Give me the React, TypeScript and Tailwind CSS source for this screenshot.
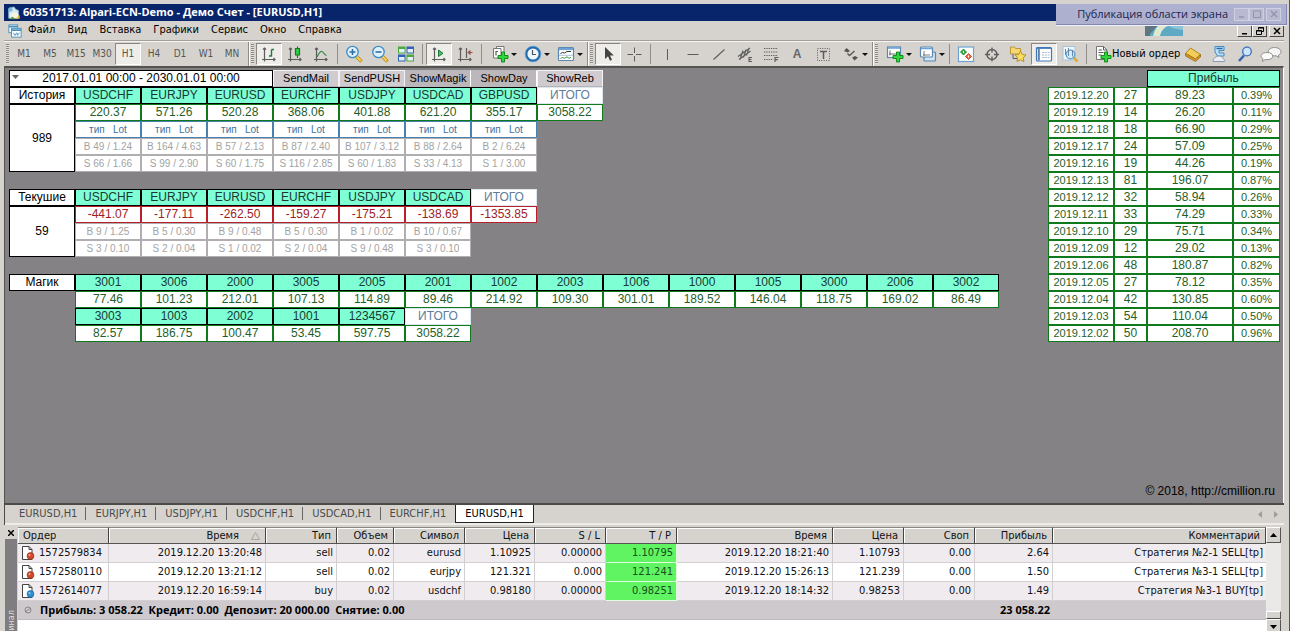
import React from 'react';
import clsx from 'clsx';

const TAHOMA = "font-['DejaVu_Sans_Condensed','DejaVu_Sans',sans-serif]";
const TAHOMA_BOLD = "font-['Open_Sans','Noto_Sans',sans-serif] font-bold";
const ARIAL = "font-['Liberation_Sans',Arial,sans-serif]";

const menuItems = ['Файл', 'Вид', 'Вставка', 'Графики', 'Сервис', 'Окно', 'Справка'];
const timeframes = ['M1', 'M5', 'M15', 'M30', 'H1', 'H4', 'D1', 'W1', 'MN'];
const chartTabs = ['EURUSD,H1', 'EURJPY,H1', 'USDJPY,H1', 'USDCHF,H1', 'USDCAD,H1', 'EURCHF,H1', 'EURUSD,H1'];

const history = [
  { symbol: 'USDCHF', profit: '220.37', buy: 'B 49 / 1.24', sell: 'S 66 / 1.66' },
  { symbol: 'EURJPY', profit: '571.26', buy: 'B 164 / 4.63', sell: 'S 99 / 2.90' },
  { symbol: 'EURUSD', profit: '520.28', buy: 'B 57 / 2.13', sell: 'S 60 / 1.75' },
  { symbol: 'EURCHF', profit: '368.06', buy: 'B 87 / 2.40', sell: 'S 116 / 2.85' },
  { symbol: 'USDJPY', profit: '401.88', buy: 'B 107 / 3.12', sell: 'S 60 / 1.83' },
  { symbol: 'USDCAD', profit: '621.20', buy: 'B 88 / 2.64', sell: 'S 33 / 4.13' },
  { symbol: 'GBPUSD', profit: '355.17', buy: 'B 2 / 6.24', sell: 'S 1 / 3.00' },
];

const current = [
  { symbol: 'USDCHF', profit: '-441.07', buy: 'B 9 / 1.25', sell: 'S 3 / 0.10' },
  { symbol: 'EURJPY', profit: '-177.11', buy: 'B 5 / 0.30', sell: 'S 2 / 0.04' },
  { symbol: 'EURUSD', profit: '-262.50', buy: 'B 9 / 0.48', sell: 'S 1 / 0.02' },
  { symbol: 'EURCHF', profit: '-159.27', buy: 'B 5 / 0.30', sell: 'S 2 / 0.04' },
  { symbol: 'USDJPY', profit: '-175.21', buy: 'B 1 / 0.02', sell: 'S 9 / 0.48' },
  { symbol: 'USDCAD', profit: '-138.69', buy: 'B 10 / 0.67', sell: 'S 3 / 0.10' },
];

const magicTop = [
  ['3001', '77.46'], ['3006', '101.23'], ['2000', '212.01'], ['3005', '107.13'], ['2005', '114.89'],
  ['2001', '89.46'], ['1002', '214.92'], ['2003', '109.30'], ['1006', '301.01'], ['1000', '189.52'],
  ['1005', '146.04'], ['3000', '118.75'], ['2006', '169.02'], ['3002', '86.49'],
];
const magicBottom = [
  ['3003', '82.57'], ['1003', '186.75'], ['2002', '100.47'], ['1001', '53.45'], ['1234567', '597.75'],
];

const days = [
  ['2019.12.20', '27', '89.23', '0.39%'],
  ['2019.12.19', '14', '26.20', '0.11%'],
  ['2019.12.18', '18', '66.90', '0.29%'],
  ['2019.12.17', '24', '57.09', '0.25%'],
  ['2019.12.16', '19', '44.26', '0.19%'],
  ['2019.12.13', '81', '196.07', '0.87%'],
  ['2019.12.12', '32', '58.94', '0.26%'],
  ['2019.12.11', '33', '74.29', '0.33%'],
  ['2019.12.10', '29', '75.71', '0.34%'],
  ['2019.12.09', '12', '29.02', '0.13%'],
  ['2019.12.06', '48', '180.87', '0.82%'],
  ['2019.12.05', '27', '78.12', '0.35%'],
  ['2019.12.04', '42', '130.85', '0.60%'],
  ['2019.12.03', '54', '110.04', '0.50%'],
  ['2019.12.02', '50', '208.70', '0.96%'],
];

const orderColumns = [
  { title: 'Ордер', width: 'w-[91px]' },
  { title: 'Время', width: 'w-[157px]' },
  { title: 'Тип', width: 'w-[71px]' },
  { title: 'Объем', width: 'w-[57px]' },
  { title: 'Символ', width: 'w-[71px]' },
  { title: 'Цена', width: 'w-[70px]' },
  { title: 'S / L', width: 'w-[71px]' },
  { title: 'T / P', width: 'w-[71px]' },
  { title: 'Время', width: 'w-[156px]' },
  { title: 'Цена', width: 'w-[71px]' },
  { title: 'Своп', width: 'w-[71px]' },
  { title: 'Прибыль', width: 'w-[78px]' },
  { title: 'Комментарий', width: '' },
];

const orders = [
  ['1572579834', '2019.12.20 13:20:48', 'sell', '0.02', 'eurusd', '1.10925', '0.00000', '1.10795', '2019.12.20 18:21:40', '1.10793', '0.00', '2.64', 'Стратегия №2-1 SELL[tp]'],
  ['1572580110', '2019.12.20 13:21:12', 'sell', '0.02', 'eurjpy', '121.321', '0.000', '121.241', '2019.12.20 15:26:13', '121.239', '0.00', '1.50', 'Стратегия №3-1 SELL[tp]'],
  ['1572614077', '2019.12.20 16:59:14', 'buy', '0.02', 'usdchf', '0.98180', '0.00000', '0.98251', '2019.12.20 18:14:32', '0.98253', '0.00', '1.49', 'Стратегия №3-1 BUY[tp]'],
];

/* ---------- icons ---------- */

const Svg: React.FC<{ children: React.ReactNode }> = ({ children }) => (
  <svg viewBox="0 0 18 18" className="w-[18px] h-[18px] shrink-0" fill="none" stroke="#5c5c5c" strokeWidth="1.2">
    {children}
  </svg>
);

const Axes = () => <path d="M4.5 3v13.5M2 14.500h13M3 4.500L4.500 3 6 4.500M13.500 13l1.500 1.500-1.500 1.500" />;

const BarsIcon = () => <Svg><Axes /><path d="M11.500 4.500v7M9 11h2.500M11.500 4.500H14" stroke="#1d7a36" strokeWidth="1.400" /></Svg>;
const CandleIcon = () => <Svg><Axes /><path d="M11.500 1.500v11.500" stroke="#157a25" /><path d="M9.500 3.500h4v6.500h-4z" fill="#2fce45" stroke="#157a25" /></Svg>;
const LineChartIcon = () => <Svg><Axes /><path d="M5 12c2-4 3.500-6 5-5.500 2 .800 2 3 4.500 4" stroke="#3a8a4a" /></Svg>;

const ZoomIcon: React.FC<{ plus?: boolean }> = ({ plus }) => (
  <Svg>
    <path d="M11.500 11.500l5 5" stroke="#b98a12" strokeWidth="3.400" />
    <path d="M11.500 11.500l4.500 4.500" stroke="#f4d256" strokeWidth="1.800" />
    <circle cx="7.500" cy="7" r="5.700" fill="#dff1fc" stroke="#3d8cc6" strokeWidth="1.300" />
    <path d={plus ? 'M4.500 7h6M7.500 4v6' : 'M4.500 7h6'} stroke="#2c6fa5" strokeWidth="1.600" />
  </Svg>
);

const TileIcon = () => (
  <Svg>
    <path d="M1 1.500h7.500v7H1z" fill="#4aa83c" stroke="none" />
    <path d="M9.500 1.500H17v7H9.500z" fill="#2f62b4" stroke="none" />
    <path d="M1 9.500h7.500v7H1z" fill="#2f62b4" stroke="none" />
    <path d="M9.500 9.500H17v7H9.500z" fill="#4aa83c" stroke="none" />
    <path d="M2 4h5.500v3.500H2zM10.500 4H16v3.500h-5.500zM2 12h5.500v3.500H2zM10.500 12H16v3.500h-5.500z" fill="#e2eff8" stroke="none" />
  </Svg>
);

const AutoScrollIcon = () => <Svg><Axes /><path d="M8.500 5v6.500l4.500-3.200z" fill="#4fc06a" stroke="#1d7a36" strokeWidth="1" /></Svg>;
const ShiftIcon = () => <Svg><Axes /><path d="M10.500 3v10" /><path d="M16.500 7.500H12.500M14.500 5.500L12.300 7.500l2.200 2" stroke="#9a4a3a" /></Svg>;
const Plus = () => <path d="M10.500 7h3v3.500H17v3h-3.500V17h-3v-3.500H7v-3h3.500z" fill="#2fd83a" stroke="#128a1c" strokeWidth="1" />;

const IndicatorIcon = () => (
  <Svg>
    <path d="M5.500 1.500H13v10H5.500z" fill="#fff" stroke="#777" strokeWidth="1" />
    <path d="M2.500 3.500h7.500v9.500H2.500z" fill="#fff" stroke="#777" strokeWidth="1" />
    <path d="M5 10.500V6.500h2" /><Plus />
  </Svg>
);
const ClockIcon = () => (
  <Svg>
    <circle cx="9" cy="9" r="6.800" fill="#eef7fd" stroke="#2468ad" strokeWidth="2.400" />
    <circle cx="9" cy="9" r="7.900" stroke="#6fb2e4" strokeWidth="0.700" />
    <path d="M8.500 5v4.500h3.500" stroke="#555" />
  </Svg>
);
const TemplateIcon = () => (
  <Svg>
    <rect x="1.500" y="2.500" width="15" height="13" rx="1" fill="#fff" stroke="#5b87b0" />
    <path d="M2 4h14" stroke="#6da3d4" strokeWidth="2.200" />
    <path d="M3.500 8.500l2-1 2 .500 2.500-1.500h4" stroke="#333" strokeWidth="1" />
    <path d="M2 10.300h14" stroke="#9bb7cf" strokeWidth=".8" />
    <path d="M3.500 13.500l2-1 2 .800 2.500-1.500 2 1.500 2-1" stroke="#3a9a4a" strokeWidth="1" />
  </Svg>
);
const CursorIcon = () => <Svg><path d="M6 2v12l3-2.800 2 4.600 2-1-2-4.300h3.800z" fill="#444" stroke="none" /></Svg>;
const CrossIcon = () => <Svg><path d="M9.500 2.500V8M9.500 11v5.500M2.500 9.500H8M11 9.500h5.500" strokeWidth="1" /></Svg>;
const VLineIcon = () => <Svg><path d="M9.500 4v11" strokeWidth="1" /></Svg>;
const HLineIcon = () => <Svg><path d="M3.500 9.500h11" strokeWidth="1" /></Svg>;
const TrendIcon = () => <Svg><path d="M3.500 14.500l11-10" strokeWidth="1.100" /></Svg>;
const ChannelIcon = () => (
  <Svg>
    <path d="M2 11.500L14 3M3 14.500L14.500 6M4 14.500l3-9M7.500 12.500l2.500-8M10.500 10.500L13 3" strokeWidth="1.100" />
    <path d="M16 12.500h-3v4h3M13 14.500h2.500" strokeWidth="1.100" />
  </Svg>
);
const FiboIcon = () => (
  <Svg>
    <path d="M2 3.500h14M2 7h14M2 10.500h14M2 14.500h9" strokeDasharray="1.300 1" strokeWidth="1.100" />
    <path d="M13 17v-4.500h3.500M13 14.700h2.800" strokeWidth="1.200" />
  </Svg>
);
const LabelIcon = () => (
  <Svg>
    <path d="M3.500 3.500h12v12h-12z" strokeDasharray="1 1.400" strokeWidth="1" />
    <path d="M6 6.500h7M9.500 6.500V14" strokeWidth="1.500" />
  </Svg>
);
const ArrowsIcon = () => (
  <Svg>
    <path d="M4.500 3L8 6 5.500 7.500 2 6zM13 11l3 1.500-3.500 3-2.500-3z" fill="#555" stroke="none" />
    <path d="M5.500 8.500l2 2L12.500 6" strokeWidth="1.500" />
  </Svg>
);
const NewChartIcon = () => (
  <Svg>
    <rect x="1.500" y="2" width="13" height="10.500" fill="#fff" stroke="#5b87b0" />
    <path d="M2 3h12" stroke="#6da3d4" strokeWidth="1.600" />
    <path d="M4 5.500v5M3 9h9" strokeWidth=".9" /><Plus />
  </Svg>
);
const ProfilesIcon = () => (
  <Svg>
    <rect x="5" y="7" width="11.500" height="9" rx="1" fill="#cfe3f5" stroke="#5b87b0" />
    <rect x="1.500" y="2" width="12" height="10" rx="1" fill="#fff" stroke="#5b87b0" />
    <path d="M2 3.500h11" stroke="#6da3d4" strokeWidth="1.500" />
    <path d="M4 10h7M5 6v5" strokeWidth=".8" />
  </Svg>
);
const MarketIcon = () => (
  <Svg>
    <rect x="1.500" y="2" width="15" height="14.500" fill="#fff" stroke="#6da3d4" />
    <path d="M6.500 4L9.500 7l-3 3-3-3z" fill="#2fae42" stroke="#1b7d2b" strokeWidth=".8" />
    <path d="M11.500 8.500l3 3-3 3-3-3z" fill="#ee6a3a" stroke="#b23c1a" strokeWidth=".8" />
    <path d="M6.500 6v2M11.500 10.500v2" stroke="#fff" strokeWidth="1" />
  </Svg>
);
const TargetIcon = () => <Svg><circle cx="9" cy="9.500" r="5" strokeWidth="1.400" /><path d="M9 2.500v5M9 11.500v5M2 9.500h5M11 9.500h5" strokeWidth="1.300" /></Svg>;
const FavoriteIcon = () => (
  <Svg>
    <path d="M1.500 2h4l1 1.500h5V9h-10z" fill="#f5d873" stroke="#b9963a" strokeWidth="1" />
    <path d="M4 9v4.500h4" strokeWidth="1" />
    <path d="M11.500 6l1.700 3.500 3.800.500-2.800 2.700.700 3.800-3.400-1.800L8 16.500l.700-3.800L6 10l3.800-.500z" fill="#fbe060" stroke="#b98f1d" strokeWidth="1" />
  </Svg>
);
const NavigatorIcon = () => (
  <Svg>
    <rect x="1.500" y="2.500" width="15" height="13.500" rx="1" fill="#fff" stroke="#3f7ab8" />
    <path d="M2 3.200h14" stroke="#3f7ab8" strokeWidth="1.400" />
    <path d="M3.800 4v11.500" stroke="#5c7fa8" strokeWidth="2" />
    <path d="M7 7.500h8M7 10h8M7 12.500h8" stroke="#9bb7cf" strokeWidth=".9" strokeDasharray="2 .8" />
  </Svg>
);
const TesterIcon = () => (
  <Svg>
    <path d="M2 1.500h12V15H2z" fill="#eef6fc" stroke="#a9c3d8" strokeWidth="1" />
    <path d="M12.500 12.500l4 4" stroke="#d9a92a" strokeWidth="2.400" />
    <circle cx="9.500" cy="9.500" r="4.300" fill="#d5eafa" stroke="#5b9bd0" strokeWidth="1.200" />
    <path d="M4.500 4v6M7.500 3v8M11.500 5v6.500" stroke="#5f7f9c" strokeWidth=".9" />
  </Svg>
);
const OrderIcon = () => (
  <Svg>
    <path d="M2.500 1.500h7l3.500 3.500v9.500H2.500z" fill="#fff" stroke="#777" strokeWidth="1" />
    <path d="M9.500 1.500V5H13M4.500 5h3.500M4.500 7.500h5M4.500 10h3" strokeWidth="1" /><Plus />
  </Svg>
);
const BookIcon = () => (
  <Svg>
    <path d="M6.500 3l10 6.500-5 4.500L1.500 8.500z" fill="#f4cc58" stroke="#b5841a" strokeWidth="1" />
    <path d="M1.500 8.500l10 5.500 5-4.500v2.500l-5 4.500-10-5.500z" fill="#d39a2a" stroke="#9b6a10" strokeWidth=".8" />
  </Svg>
);
const ScrollIcon = () => (
  <Svg>
    <path d="M5 1.500h9v4H9V8h5v3H7.500L5 7z" fill="#bfe0f5" stroke="#3d8cc6" strokeWidth="1" />
    <path d="M6.500 3.500h6" stroke="#2468ad" strokeWidth="1.500" />
    <path d="M3 16.500c0-3 3-5.500 6-5.500s4 2 5 3.500c1 1 1 2 0 2z" fill="#e8eef4" stroke="#8899aa" strokeWidth="1" />
  </Svg>
);
const SearchIcon = () => (
  <Svg>
    <path d="M8 10.500L3 16" stroke="#3a62b0" strokeWidth="2.600" />
    <circle cx="11" cy="6.500" r="4.300" fill="#cfe6fa" stroke="#3a6fc4" strokeWidth="1.300" />
  </Svg>
);
const ChatIcon = () => (
  <svg viewBox="0 0 22 18" className="w-[22px] h-[18px] shrink-0" stroke="#8e8e8e" strokeWidth="1">
    <path d="M14.500 2.500c3.600 0 6.500 1.800 6.500 4.200 0 1.500-1 2.600-2.500 3.400l.5 2.400-2.800-1.700c-4.800.5-8-1.400-8-4.100 0-2.400 2.700-4.200 6.300-4.200z" fill="#f6f6f6" />
    <path d="M7 7.500c3.300 0 5.800 1.500 5.800 3.600S10.300 14.700 7 14.700c-.7 0-1.300 0-1.900-.2L2.500 16.500l.4-2.900C1.700 13 1 12.100 1 11.100 1 9 3.700 7.500 7 7.500z" fill="#fbfbfb" />
  </svg>
);

const AppIcon = () => (
  <svg viewBox="0 0 16 16" className="w-3.5 h-3.5 shrink-0">
    <path d="M2 3l6-2 2 3 3 1v9H2z" fill="#d8ecf8" stroke="#8fb6cf" strokeWidth="1" />
    <circle cx="4" cy="4" r="2.500" fill="#79b7dd" />
    <path d="M4 10l4-3 5 2v5H4z" fill="#f6f3df" />
    <path d="M10 15l5-1-1-4z" fill="#e4b43c" />
    <path d="M3 15l3-3 4 3z" fill="#5a9b4a" />
  </svg>
);

const DocIcon = () => (
  <svg viewBox="0 0 16 16" className="w-3.5 h-3.5 shrink-0" fill="#fff" stroke="#4a93bd" strokeWidth="1.100">
    <rect x="1" y="1" width="10" height="9" />
    <path d="M1 3h10" strokeWidth="2" />
    <rect x="4" y="5" width="11" height="10" />
    <path d="M4 7h11" strokeWidth="2" />
    <path d="M6 10l2 3 2-3 1 3 2-3" fill="none" />
  </svg>
);

const OrderRowIcon: React.FC<{ buy: boolean }> = ({ buy }) => (
  <svg viewBox="0 0 14 14" className="w-3.5 h-3.5 shrink-0">
    <path d="M1.500.5h6.500l3 3v10h-9.500z" fill="#fff" stroke="#444" strokeWidth="1" />
    <path d="M8 .5v3h3" fill="none" stroke="#444" strokeWidth="1" />
    <circle cx="9.500" cy="10" r="3.400" fill={buy ? '#2f8fd0' : '#d2492a'} stroke={buy ? '#17639c' : '#8f2c16'} strokeWidth=".7" />
    <circle cx="8.500" cy="9" r="1" fill="#fff" opacity=".55" />
  </svg>
);

/* ---------- toolbar ---------- */

type ToolProps = { label: string; icon: React.ReactNode; pressed?: boolean; menu?: boolean };

const Tool: React.FC<ToolProps> = ({ label, icon, pressed, menu }) => (
  <button
    aria-label={label}
    className={clsx(
      'h-[22px] flex items-center shrink-0',
      menu ? 'w-[33px] pl-1.5 gap-0.5' : 'w-[26px] justify-center',
      pressed && 'bg-[#efedea] border-t border-l border-[#8a8782] border-r-white border-b-white border-r border-b',
    )}
  >
    {icon}
    {menu && <svg viewBox="0 0 6 3" className="w-1.5 h-[3px] shrink-0" fill="#111"><path d="M0 0h6L3 3z" /></svg>}
  </button>
);

const Grip = () => (
  <div className="w-[3px] h-5 mx-0.5 shrink-0 bg-[repeating-linear-gradient(#8d8a86_0_1px,#e4e1dc_1px_2px)]" />
);
const Separator = () => <div className="w-px h-5 mx-[3px] shrink-0 bg-[#918e89]" />;

const ToolGroup: React.FC<{ children: React.ReactNode; last?: boolean }> = ({ children, last }) => (
  <div className={clsx('flex items-center h-full', last ? 'flex-1 min-w-0' : 'pr-[3px] border-r border-[#8f8c87] shadow-[1px_0_0_#fff]')}>
    <Grip />
    {children}
  </div>
);

const Toolbar = () => (
  <div className="flex items-center h-[25px] border-t border-[#f6f5f3] bg-[#d6d3ce]">
    <ToolGroup>
      {timeframes.map((tf) => (
        <button
          key={tf}
          className={clsx(
            'w-[26px] h-[22px] text-[10px] leading-5 text-[#555]',
            tf === 'H1' && 'bg-[#efedea] border border-[#8a8782] border-r-white border-b-white',
          )}
        >
          {tf}
        </button>
      ))}
    </ToolGroup>
    <ToolGroup>
      <Tool label="Бары" icon={<BarsIcon />} pressed />
      <Tool label="Свечи" icon={<CandleIcon />} />
      <Tool label="Линия" icon={<LineChartIcon />} />
      <Separator />
      <Tool label="Увеличить" icon={<ZoomIcon plus />} />
      <Tool label="Уменьшить" icon={<ZoomIcon />} />
      <Tool label="Окна мозаикой" icon={<TileIcon />} />
      <Separator />
      <Tool label="Автопрокрутка" icon={<AutoScrollIcon />} pressed />
      <Tool label="Сдвиг графика" icon={<ShiftIcon />} />
      <Separator />
      <Tool label="Индикаторы" icon={<IndicatorIcon />} menu />
      <Tool label="Периоды" icon={<ClockIcon />} menu />
      <Tool label="Шаблоны" icon={<TemplateIcon />} menu />
    </ToolGroup>
    <ToolGroup>
      <Tool label="Курсор" icon={<CursorIcon />} pressed />
      <Tool label="Перекрестие" icon={<CrossIcon />} />
      <Separator />
      <Tool label="Вертикальная линия" icon={<VLineIcon />} />
      <Tool label="Горизонтальная линия" icon={<HLineIcon />} />
      <Tool label="Трендовая линия" icon={<TrendIcon />} />
      <Tool label="Канал" icon={<ChannelIcon />} />
      <Tool label="Фибоначчи" icon={<FiboIcon />} />
      <Tool label="Текст" icon={<span className={clsx(ARIAL, 'text-xs font-bold text-[#666]')}>A</span>} />
      <Tool label="Метка" icon={<LabelIcon />} />
      <Tool label="Стрелки" icon={<ArrowsIcon />} menu />
    </ToolGroup>
    <ToolGroup last>
      <Tool label="Новый график" icon={<NewChartIcon />} menu />
      <Tool label="Профили" icon={<ProfilesIcon />} menu />
      <Separator />
      <Tool label="Обзор рынка" icon={<MarketIcon />} />
      <Tool label="Окно данных" icon={<TargetIcon />} />
      <Tool label="Навигатор" icon={<FavoriteIcon />} />
      <Tool label="Терминал" icon={<NavigatorIcon />} pressed />
      <Tool label="Тестер" icon={<TesterIcon />} />
      <Separator />
      <button className="flex items-center h-[22px] pl-1 text-[11px] text-black whitespace-nowrap">
        <OrderIcon />
        Новый ордер
      </button>
      <Tool label="MetaEditor" icon={<BookIcon />} />
      <Tool label="Журнал" icon={<ScrollIcon />} />
      <Tool label="Поиск" icon={<SearchIcon />} />
      <div className="ml-auto"><Tool label="Чат" icon={<ChatIcon />} /></div>
    </ToolGroup>
  </div>
);

/* ---------- chart panel ---------- */

const cell = 'h-[17px] p-0 border text-center text-xs leading-[15px] font-normal whitespace-nowrap';
const blackCell = 'bg-white border-black text-black';
const aquaCell = 'bg-[#7fffd4] border-black text-[#173a33]';
const greenCell = 'bg-white border-[#0f7a1c] text-[#1f5f2a]';
const redCell = 'bg-white border-[#b81f28] text-[#a01c26]';
const totalCell = 'bg-white border-[#dbe6ee] text-[#5e7d99]';
const grayCell = 'bg-white border-[#b0aeb0] text-[#a3a3a3] text-[10px]';
const typeCell = 'bg-white border-[#4a80ad] text-[#41749c] text-[10px] whitespace-pre';

type SymbolRow = { symbol: string; profit: string; buy: string; sell: string };

const SymbolTable: React.FC<{ title: string; count: string; rows: SymbolRow[]; total: string; negative?: boolean }> = ({
  title, count, rows, total, negative,
}) => {
  const profitCell = negative ? redCell : greenCell;
  return (
    <table className="self-start table-fixed border-separate border-spacing-0">
      <colgroup>
        {Array.from({ length: rows.length + 2 }, (_, i) => <col key={i} className="w-[66px]" />)}
      </colgroup>
      <tbody>
        <tr>
          <th className={clsx(cell, blackCell)}>{title}</th>
          {rows.map((r) => <th key={r.symbol} className={clsx(cell, aquaCell)}>{r.symbol}</th>)}
          <th className={clsx(cell, totalCell)}>ИТОГО</th>
        </tr>
        <tr>
          <td rowSpan={negative ? 3 : 4} className={clsx(cell, blackCell)}>{count}</td>
          {rows.map((r) => <td key={r.symbol} className={clsx(cell, profitCell)}>{r.profit}</td>)}
          <td className={clsx(cell, profitCell)}>{total}</td>
        </tr>
        {!negative && (
          <tr>{rows.map((r) => <td key={r.symbol} className={clsx(cell, typeCell)}>{'тип   Lot'}</td>)}</tr>
        )}
        <tr>{rows.map((r) => <td key={r.symbol} className={clsx(cell, grayCell)}>{r.buy}</td>)}</tr>
        <tr>{rows.map((r) => <td key={r.symbol} className={clsx(cell, grayCell)}>{r.sell}</td>)}</tr>
      </tbody>
    </table>
  );
};

const MagicTable = () => (
  <table className="self-start table-fixed border-separate border-spacing-0">
    <colgroup>
      {Array.from({ length: magicTop.length + 1 }, (_, i) => <col key={i} className="w-[66px]" />)}
    </colgroup>
    <tbody>
      <tr>
        <th className={clsx(cell, blackCell)}>Магик</th>
        {magicTop.map(([id]) => <th key={id} className={clsx(cell, aquaCell)}>{id}</th>)}
      </tr>
      <tr>
        <td />
        {magicTop.map(([id, sum]) => <td key={id} className={clsx(cell, greenCell)}>{sum}</td>)}
      </tr>
      <tr>
        <td />
        {magicBottom.map(([id]) => <th key={id} className={clsx(cell, aquaCell)}>{id}</th>)}
        <th className={clsx(cell, totalCell)}>ИТОГО</th>
      </tr>
      <tr>
        <td />
        {magicBottom.map(([id, sum]) => <td key={id} className={clsx(cell, greenCell)}>{sum}</td>)}
        <td className={clsx(cell, greenCell)}>3058.22</td>
      </tr>
    </tbody>
  </table>
);

const DayTable = () => (
  <table className="self-start shrink-0 table-fixed border-separate border-spacing-0">
    <colgroup>
      <col className="w-[66px]" />
      <col className="w-[33px]" />
      <col className="w-[86px]" />
      <col className="w-[47px]" />
    </colgroup>
    <tbody>
      <tr>
        <td colSpan={2} />
        <th colSpan={2} className={clsx(cell, aquaCell)}>Прибыль</th>
      </tr>
      {days.map(([date, count, sum, percent]) => (
        <tr key={date}>
          <td className={clsx(cell, greenCell, 'text-[11px]')}>{date}</td>
          <td className={clsx(cell, greenCell)}>{count}</td>
          <td className={clsx(cell, greenCell)}>{sum}</td>
          <td className={clsx(cell, greenCell, 'text-[11px]')}>{percent}</td>
        </tr>
      ))}
    </tbody>
  </table>
);

const scriptButton = 'w-[66px] h-[17px] border text-[11px] leading-[15px] text-black whitespace-nowrap';
const raised = 'bg-[#cfcbcf] border-[#f4f2f4] border-b-[#b5b1b5]';
const sunken = 'bg-[#bbb7bb] border-[#bbb7bb] border-r-white';

const ChartPanel = () => (
  <main className={clsx(ARIAL, 'flex-1 min-h-0 flex flex-col justify-between bg-[#848284] border-t-2 border-x border-[#55534f] border-r-white pl-1 pr-[3px] pt-0.5 pb-1')}>
    <div className="flex justify-between">
      <div className="flex flex-col gap-[17px]">
        <div className="flex flex-col">
          <div className="flex">
            <div className="relative w-[264px] h-[17px]">
              <select aria-label="Период" className="block w-full h-[17px] appearance-none bg-white border border-black text-xs leading-[15px] text-black [text-align-last:center]">
                <option>2017.01.01 00:00 - 2030.01.01 00:00</option>
              </select>
              <svg viewBox="0 0 7 4" className="absolute left-[3px] top-[5px] w-[7px] h-1" fill="#666"><path d="M0 0h7L3.500 4z" /></svg>
            </div>
            <button className={clsx(scriptButton, raised)}>SendMail</button>
            <button className={clsx(scriptButton, raised)}>SendPUSH</button>
            <button className={clsx(scriptButton, sunken)}>ShowMagik</button>
            <button className={clsx(scriptButton, sunken)}>ShowDay</button>
            <button className={clsx(scriptButton, raised)}>ShowReb</button>
          </div>
          <SymbolTable title="История" count="989" rows={history} total="3058.22" />
        </div>
        <SymbolTable title="Текушие" count="59" rows={current} total="-1353.85" negative />
        <MagicTable />
      </div>
      <DayTable />
    </div>
    <div className="text-right text-xs text-black pr-[5px]">© 2018, http://cmillion.ru</div>
  </main>
);

const ChartTabs = () => (
  <nav className="flex items-start h-[22px] border-t-2 border-l border-[#4c4a47] bg-[#d6d3ce] shadow-[inset_0_-2px_0_#eeece8] pl-[5px]">
    {chartTabs.map((tab, i) => {
      const active = i === chartTabs.length - 1;
      return (
        <a
          key={i}
          href="#"
          className={clsx(
            'px-[9px] text-[11px] leading-[17px] whitespace-nowrap',
            active ? 'bg-white text-black border border-t-0 border-[#222]' : 'text-[#4a4a4a]',
            !active && i < chartTabs.length - 2 && 'bg-[linear-gradient(#666,#666)] bg-[length:1px_13px] bg-[position:right_2px] bg-no-repeat',
          )}
        >
          {tab}
        </a>
      );
    })}
    <div className="ml-auto flex items-center gap-3 h-[18px] pr-1.5">
      <svg viewBox="0 0 4 7" className="w-1 h-[7px]" fill="#a09d98"><path d="M4 0v7L0 3.500z" /></svg>
      <svg viewBox="0 0 4 7" className="w-1 h-[7px]" fill="#a09d98"><path d="M0 0v7l4-3.500z" /></svg>
    </div>
  </nav>
);

/* ---------- terminal ---------- */

const scrollButton = 'flex items-center justify-center w-[15px] h-4 shrink-0 bg-[#d6d3ce] border border-white border-r-[#555] border-b-[#555]';

const Terminal = () => (
  <section className="flex h-[106px] shrink-0 overflow-hidden pt-0.5">
    <div className="w-[14px] shrink-0 flex flex-col">
      <button aria-label="Закрыть панель" className="h-3 flex items-center justify-center">
        <svg viewBox="0 0 6 6" className="w-1.5 h-1.5" stroke="#000" strokeWidth="1.500"><path d="M0 0l6 6M6 0L0 6" /></svg>
      </button>
      <div className="flex-1 flex flex-col justify-end mx-px bg-[#7f7d7f]">
        <span className="[writing-mode:vertical-rl] rotate-180 text-[9px] leading-[12px] text-[#dedcd8]">инал</span>
      </div>
    </div>
    <div className="flex-1 min-w-0 bg-white">
      <table className="w-full table-fixed border-separate border-spacing-0 text-[11px] leading-4 text-[#111]">
        <colgroup>
          {orderColumns.map((c, i) => <col key={i} className={c.width} />)}
        </colgroup>
        <thead>
          <tr>
            {orderColumns.map((c, i) => (
              <th
                key={i}
                className={clsx(
                  'h-[17px] py-0 font-normal leading-[14px] bg-[#d6d3ce] border-t border-t-[#8a8782] border-b border-b-[#555] border-r border-r-[#444] shadow-[inset_1px_1px_0_#fff]',
                  i === 0 ? 'text-left pl-[5px]' : 'text-right pr-[5px]',
                )}
              >
                {c.title}
                {i === 1 && (
                  <svg viewBox="0 0 9 8" className="inline w-[9px] h-2 ml-3" fill="none" stroke="#aaa6a0"><path d="M.5 7.500L4.500.5l4 7z" /></svg>
                )}
              </th>
            ))}
          </tr>
        </thead>
        <tbody>
          {orders.map((row, r) => (
            <tr key={row[0]} className={r % 2 ? 'bg-white' : 'bg-[#f0ebef]'}>
              {row.map((value, i) => (
                <td
                  key={i}
                  className={clsx(
                    'h-[19px] py-0 leading-[18px] whitespace-nowrap border-b border-[#d2ced2]',
                    i < row.length - 1 && 'border-r',
                    i === 0 ? 'pl-[3px]' : 'text-right pr-[3px]',
                    i === 7 && 'bg-[#60f362] border-[#e3fbe3] text-[#14501a]',
                  )}
                >
                  {i === 0 ? (
                    <span className="flex items-center gap-1">
                      <OrderRowIcon buy={row[2] === 'buy'} />
                      {value}
                    </span>
                  ) : value}
                </td>
              ))}
            </tr>
          ))}
          <tr className={clsx(TAHOMA_BOLD, 'bg-[#cdc9cd] text-black')}>
            <td colSpan={11} className="h-[19px] p-0 pl-1.5 border-b border-[#bdb9bd] whitespace-pre">
              <span className="flex items-center gap-2">
                <svg viewBox="0 0 8 8" className="w-2 h-2" fill="none" stroke="#888"><circle cx="4" cy="4" r="3" /><path d="M2 5.500L6 2.500" /></svg>
                {'Прибыль: 3 058.22  Кредит: 0.00  Депозит: 20 000.00  Снятие: 0.00'}
              </span>
            </td>
            <td className="p-0 pr-[3px] text-right border-b border-[#bdb9bd]">23 058.22</td>
            <td className="p-0 border-b border-[#bdb9bd]" />
          </tr>
        </tbody>
      </table>
    </div>
    <div className="w-[15px] mr-[3px] shrink-0 flex flex-col bg-[#ebe9e7]">
      <button aria-label="Вверх" className={scrollButton}>
        <svg viewBox="0 0 7 4" className="w-[7px] h-1"><path d="M0 4h7L3.500 0z" /></svg>
      </button>
      <div className="mt-auto h-2 bg-[#d6d3ce] border border-white border-b-[#444] border-r-[#555]" />
      <button aria-label="Вниз" className={clsx(scrollButton, '-mb-1')}>
        <svg viewBox="0 0 7 4" className="w-[7px] h-1"><path d="M0 0h7L3.500 4z" /></svg>
      </button>
    </div>
  </section>
);

/* ---------- window ---------- */

const mdiButton = 'flex items-center justify-center w-[15px] h-3 bg-[#d6d3ce] border border-white border-r-[#444] border-b-[#444]';
const ghostButton = 'flex items-center justify-center w-[15px] h-[13px] bg-[#b9bad2] border border-[#cfd0e2]';

const App: React.FC = () => (
  <div className={clsx(TAHOMA, 'relative h-screen overflow-hidden flex flex-col bg-[#d6d3ce] pt-1 pl-1 pr-[5px] border-r border-[#555]')}>
    <header className={clsx(TAHOMA_BOLD, 'flex items-center gap-0.5 h-[17px] shrink-0 pl-[3px] bg-[#08246b] text-white text-[11px] whitespace-nowrap')}>
      <AppIcon />
      60351713: Alpari-ECN-Demo - Демо Счет - [EURUSD,H1]
    </header>

    <div className="flex items-center h-[19px] shrink-0 pl-1 text-[11px] text-black">
      <DocIcon />
      <nav className="flex">
        {menuItems.map((item) => <button key={item} className="px-1.5">{item}</button>)}
      </nav>
      <svg viewBox="0 0 38 10" className="ml-auto mr-[54px] w-[38px] h-2.5 self-end mb-1" preserveAspectRatio="none">
        <path d="M0 0h38v10H0z" fill="#5fa9c4" />
        <path d="M0 0h12L5 8v2H0z" fill="#5d7682" />
        <path d="M13 0h10c-5 2-7 6-8 10H8c1-4 2-7 5-10z" fill="#dfe9cf" />
        <path d="M24 0h14v4c-6-1-10-1-14-4z" fill="#8fc4d8" />
      </svg>
      <div className="flex self-end mb-[3px]">
        <button aria-label="Свернуть" className={mdiButton}>
          <svg viewBox="0 0 8 8" className="w-2 h-2"><path d="M1 6h5v1.500H1z" /></svg>
        </button>
        <button aria-label="Восстановить" className={mdiButton}>
          <svg viewBox="0 0 8 8" className="w-2 h-2" fill="none" stroke="#000"><path d="M2.500 2.500v-2h5v4h-2M.5 3.500h5v4h-5zM.5 4h5M2.500 1h5" /></svg>
        </button>
        <button aria-label="Закрыть" className={clsx(mdiButton, 'ml-0.5')}>
          <svg viewBox="0 0 8 8" className="w-2 h-2" stroke="#000" strokeWidth="1.500"><path d="M1 1l6 6M7 1L1 7" /></svg>
        </button>
      </div>
    </div>

    <div className="shrink-0 border-t border-[#a3a09b]"><Toolbar /></div>
    <ChartPanel />
    <ChartTabs />
    <Terminal />

    {/* translucent screen sharing bar over the caption */}
    <div className="absolute top-1 right-0.5 flex items-center justify-end w-[231px] h-[21px] pr-[5px] bg-[#adb0cf] border-b border-r border-[#8487b3] shadow-[0_1px_0_#f2f1f4] whitespace-nowrap">
      <span className="font-['Open_Sans','Noto_Sans',sans-serif] text-[11px] text-[#1c2350] pr-1.5">Публикация области экрана</span>
      <button aria-label="Свернуть окно" className={ghostButton}>
        <svg viewBox="0 0 8 8" className="w-2 h-2" stroke="#9193ab" strokeWidth="1.500"><path d="M1 7h5" /></svg>
      </button>
      <button aria-label="Развернуть окно" className={ghostButton}>
        <svg viewBox="0 0 8 8" className="w-2 h-2" fill="none" stroke="#9193ab"><path d="M.5 1h7v6.500h-7z" /></svg>
      </button>
      <button aria-label="Закрыть окно" className={clsx(ghostButton, 'ml-0.5')}>
        <svg viewBox="0 0 8 8" className="w-2 h-2" stroke="#9193ab" strokeWidth="1.300"><path d="M1 1l6 6M7 1L1 7" /></svg>
      </button>
    </div>
  </div>
);

export default App;
